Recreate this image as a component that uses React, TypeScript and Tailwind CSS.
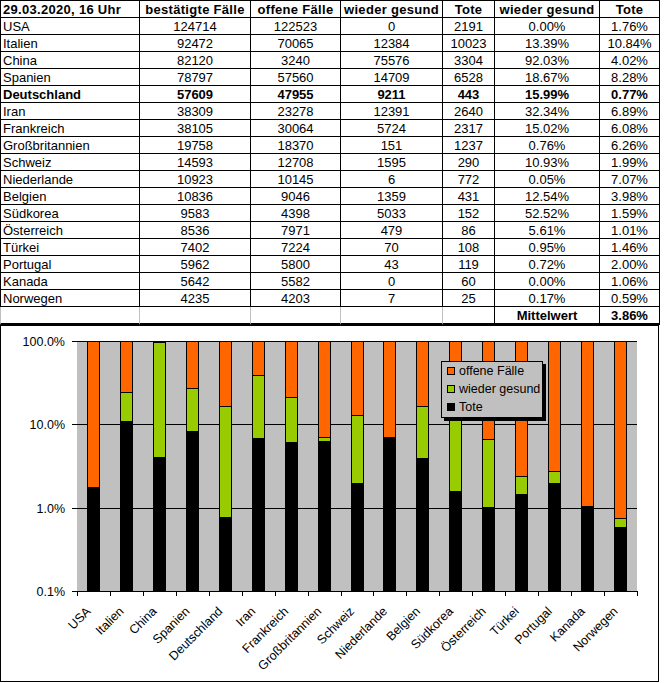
import React from 'react';

type Row = [string, number, number, number, number, string, string];

const rows: Row[] = [
  ['USA', 124714, 122523, 0, 2191, '0.00%', '1.76%'],
  ['Italien', 92472, 70065, 12384, 10023, '13.39%', '10.84%'],
  ['China', 82120, 3240, 75576, 3304, '92.03%', '4.02%'],
  ['Spanien', 78797, 57560, 14709, 6528, '18.67%', '8.28%'],
  ['Deutschland', 57609, 47955, 9211, 443, '15.99%', '0.77%'],
  ['Iran', 38309, 23278, 12391, 2640, '32.34%', '6.89%'],
  ['Frankreich', 38105, 30064, 5724, 2317, '15.02%', '6.08%'],
  ['Großbritannien', 19758, 18370, 151, 1237, '0.76%', '6.26%'],
  ['Schweiz', 14593, 12708, 1595, 290, '10.93%', '1.99%'],
  ['Niederlande', 10923, 10145, 6, 772, '0.05%', '7.07%'],
  ['Belgien', 10836, 9046, 1359, 431, '12.54%', '3.98%'],
  ['Südkorea', 9583, 4398, 5033, 152, '52.52%', '1.59%'],
  ['Österreich', 8536, 7971, 479, 86, '5.61%', '1.01%'],
  ['Türkei', 7402, 7224, 70, 108, '0.95%', '1.46%'],
  ['Portugal', 5962, 5800, 43, 119, '0.72%', '2.00%'],
  ['Kanada', 5642, 5582, 0, 60, '0.00%', '1.06%'],
  ['Norwegen', 4235, 4203, 7, 25, '0.17%', '0.59%'],
];

const grid = 'grid grid-cols-[140px_111px_90px_102px_52px_105px_60px]';

function Cell({ children, className = '' }: { children?: React.ReactNode; className?: string }) {
  return (
    <div className={`flex h-[17px] items-center justify-center border-r border-b border-black leading-none ${className}`}>
      {children}
    </div>
  );
}

function Table() {
  const head = ['bestätigte Fälle', 'offene Fälle', 'wieder gesund', 'Tote', 'wieder gesund', 'Tote'];
  return (
    <div className="w-[660px] text-[13px] text-black">
      <div className={`${grid} font-bold tracking-[0.3px]`}>
        <Cell className="h-[18px] justify-start border-t border-l pl-[2px]">29.03.2020, 16 Uhr</Cell>
        {head.map((h, i) => (
          <Cell key={i} className="h-[18px] border-t">{h}</Cell>
        ))}
      </div>
      {rows.map((r) => (
        <div key={r[0]} className={`${grid} ${r[0] === 'Deutschland' ? 'font-bold' : ''}`}>
          <Cell className="justify-start border-l pl-[2px]">{r[0]}</Cell>
          <Cell>{r[1]}</Cell>
          <Cell>{r[2]}</Cell>
          <Cell>{r[3]}</Cell>
          <Cell>{r[4]}</Cell>
          <Cell>{r[5]}</Cell>
          <Cell>{r[6]}</Cell>
        </div>
      ))}
      <div className={grid}>
        <Cell className="h-[18px] border-l border-l-[#c0c0c0] border-r-[#c0c0c0] border-b-2" />
        <Cell className="h-[18px] border-r-[#c0c0c0] border-b-2" />
        <Cell className="h-[18px] border-r-[#c0c0c0] border-b-2" />
        <Cell className="h-[18px] border-r-[#c0c0c0] border-b-2" />
        <Cell className="h-[18px] border-b-2" />
        <Cell className="h-[18px] border-b-2 font-bold">Mittelwert</Cell>
        <Cell className="h-[18px] border-b-2 font-bold">3.86%</Cell>
      </div>
    </div>
  );
}

const X0 = 77;
const X1 = 637;
const YT = 341;
const YB = 591;
const catW = (X1 - X0) / rows.length;
const yOf = (p: number) => YB - ((Math.log10(p) + 1) * (YB - YT)) / 3;

function Chart() {
  const levels = [
    { y: 341, label: '100.0%' },
    { y: 424, label: '10.0%' },
    { y: 508, label: '1.0%' },
    { y: 591, label: '0.1%' },
  ];
  return (
    <div className="relative h-[357px] w-[659px] border border-black bg-white">
      <svg width={657} height={355} viewBox="1 326 657 355" className="block">
        <rect x={X0} y={YT} width={X1 - X0} height={YB - YT} fill="#c0c0c0" />
        {levels.map((l) => (
          <g key={l.label}>
            {l.y !== 591 && <line x1={X0} x2={X1} y1={l.y + 0.5} y2={l.y + 0.5} stroke="#000" />}
            <line x1={72} x2={X0} y1={l.y + 0.5} y2={l.y + 0.5} stroke="#000" />
            <text x={65} y={l.y + 5} fontSize={12.5} textAnchor="end" fill="#000">
              {l.label}
            </text>
          </g>
        ))}
        {rows.map((r, i) => {
          const cx = X0 + catW * (i + 0.5);
          const left = Math.round(cx - 6.5) + 0.5;
          const tote = parseFloat(r[6]);
          const sum = tote + parseFloat(r[5]);
          const yT = Math.round(yOf(tote));
          const yG = Math.round(yOf(sum));
          return (
            <g key={r[0]} stroke="#000" strokeWidth={1}>
              <rect x={left} y={YT + 0.5} width={12} height={yG - YT} fill="#ff6600" />
              {yT - yG > 0 && <rect x={left} y={yG + 0.5} width={12} height={yT - yG} fill="#99cc00" />}
              <rect x={left} y={yT + 0.5} width={12} height={YB - yT} fill="#000" />
            </g>
          );
        })}
        <line x1={X0} x2={X1} y1={YB + 0.5} y2={YB + 0.5} stroke="#000" />
        {Array.from({ length: rows.length + 1 }, (_, k) => {
          const x = Math.round(X0 + catW * k) + 0.5;
          return <line key={k} x1={x} x2={x} y1={YB} y2={596} stroke="#000" />;
        })}
        {rows.map((r, i) => {
          const cx = X0 + catW * (i + 0.5);
          return (
            <text
              key={r[0]}
              transform={`translate(${cx - 2} 612) rotate(-45)`}
              fontSize={12.5}
              textAnchor="end"
              fill="#000"
            >
              {r[0]}
            </text>
          );
        })}
      </svg>
      <div className="absolute left-[440px] top-[35px] flex h-[57px] w-[102px] flex-col border border-black bg-[#c0c0c0] pl-[5px] text-[12.5px] shadow-[3px_3px_0_#000]">
        {[
          ['offene Fälle', 'bg-[#ff6600]'],
          ['wieder gesund', 'bg-[#99cc00]'],
          ['Tote', 'bg-black'],
        ].map(([t, c]) => (
          <div key={t} className="flex h-[18px] items-center gap-[4px] leading-none">
            <span className={`h-[8px] w-[8px] border border-black ${c}`} />
            <span>{t}</span>
          </div>
        ))}
      </div>
    </div>
  );
}

export default function App() {
  return (
    <div className="min-h-[683px] w-[665px] bg-white font-['Liberation_Sans',Arial,sans-serif] text-black">
      <Table />
      <Chart />
    </div>
  );
}
